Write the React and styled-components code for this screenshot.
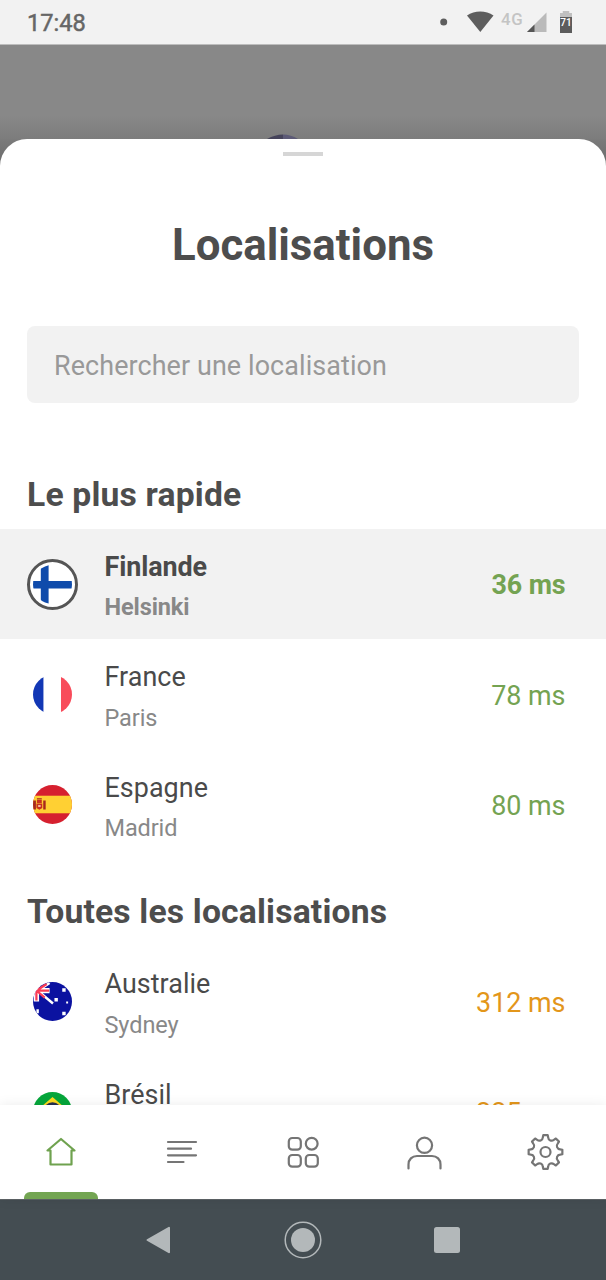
import React from "react";
import styled, { createGlobalStyle } from "styled-components";

const GlobalStyle = createGlobalStyle`
  body {
    margin: 0;
    font-family: Roboto, "Liberation Sans", sans-serif;
    background: #fff;
  }

  * {
    box-sizing: border-box;
  }
`;

const Screen = styled.div`
  display: flex;
  flex-direction: column;
  width: 606px;
  height: 1280px;
  overflow: hidden;
  background: #888;
`;

const StatusBar = styled.header`
  display: flex;
  justify-content: space-between;
  flex: none;
  height: 45px;
  padding-left: 27px;
  background: #f2f2f2;
  border-bottom: 1px solid #bdbdbd;
`;

const Clock = styled.span`
  font-size: 23.6px;
  font-weight: 400;
  line-height: 46px;
  color: #666;
  -webkit-text-stroke: 0.5px #666;
`;

const StatusIcons = styled.div`
  display: flex;
  align-items: flex-start;
  padding-right: 34px;

  svg {
    display: block;
  }
`;

const Network = styled.span`
  width: 26px;
  margin-left: 7px;
  font-size: 16.8px;
  font-weight: 500;
  line-height: 38px;
  color: #c4c4c4;
  letter-spacing: 0.6px;
`;

const Battery = styled.div`
  display: flex;
  justify-content: center;
  width: 12px;
  height: 22px;
  margin: 11px 0 0 13px;
  padding-top: 4px;
  background: linear-gradient(#c0c0c0 6px, #5c5c5c 6px);
  clip-path: polygon(23% 0, 77% 0, 77% 2px, 100% 2px, 100% 100%, 0 100%, 0 2px, 23% 2px);
  font-size: 10px;
  font-weight: 500;
  line-height: 15px;
  color: #fff;
`;

const Backdrop = styled.div`
  display: flex;
  flex: none;
  align-items: flex-end;
  height: 94px;
  padding-left: 263px;
  background: linear-gradient(#888 0, #888 70px, #7c7c7c 94px);

  svg {
    display: block;
  }
`;

const SheetArea = styled.main`
  flex: none;
  height: 966px;
  overflow: hidden;
  background: linear-gradient(#7b7b7b, #686868 30px);
`;

const Sheet = styled.section`
  display: flex;
  flex-direction: column;
  height: 1040px;
  padding-top: 13px;
  background: #fff;
  border-radius: 27px 27px 0 0;
`;

const Handle = styled.div`
  flex: none;
  align-self: center;
  width: 40px;
  height: 4px;
  background: #d6d6d6;
`;

const Title = styled.h1`
  margin: 59px 0 0;
  font-size: 43.8px;
  font-weight: 700;
  line-height: 60px;
  text-align: center;
  color: #4d4d4d;
`;

const Search = styled.input`
  flex: none;
  height: 77px;
  margin: 51px 27px 72px;
  padding: 2px 27px 0;
  border: 0;
  border-radius: 8px;
  background: #f2f2f2;
  font-family: inherit;
  font-size: 26.9px;
  letter-spacing: 0.11px;
  color: #4d4d4d;

  &::placeholder {
    color: #999;
    opacity: 1;
  }
`;

const SectionTitle = styled.h2`
  flex: none;
  margin: 0;
  padding: ${props => (props.$first ? 0 : 32)}px 27px 14px;
  font-size: 33.7px;
  font-weight: 700;
  line-height: 40px;
  letter-spacing: 0.17px;
  color: #4d4d4d;
`;

const Row = styled.div`
  display: flex;
  flex: none;
  align-items: center;
  height: 110.4px;
  padding: 0 40.5px 0 27px;
  background: ${props => (props.$active ? "#f2f2f2" : "transparent")};
  font-weight: ${props => (props.$active ? 700 : 400)};
`;

const FlagRing = styled.div`
  display: flex;
  align-items: center;
  justify-content: center;
  width: 51px;
  height: 51px;
  border: 3.5px solid ${props => (props.$active ? "#555" : "transparent")};
  border-radius: 50%;
  background: ${props => (props.$active ? "#fff" : "transparent")};

  svg {
    flex: none;
  }
`;

const Place = styled.div`
  flex: 1;
  padding: 6.6px 0 0 26.5px;
  line-height: 40.4px;
`;

const Country = styled.div`
  font-size: 26.9px;
  letter-spacing: ${props => (props.$active ? -0.1 : 0.05)}px;
  color: #4a4a4a;
`;

const City = styled.div`
  min-height: 40.4px;
  font-size: 23.5px;
  letter-spacing: -0.1px;
  color: #888;
`;

const Ping = styled.div`
  padding-top: 2.5px;
  font-size: 26.9px;
  letter-spacing: ${props => (props.$active ? -0.15 : 0)}px;
  color: ${props => (props.$slow ? "#e3961a" : "#74a352")};
`;

const TabBar = styled.nav`
  position: relative;
  display: flex;
  flex: none;
  height: 94px;
  background: #fff;
  box-shadow: 0 0 12px rgba(0, 0, 0, 0.08);
`;

const Tab = styled.button`
  display: flex;
  flex: 1;
  flex-direction: column;
  align-items: center;
  justify-content: space-between;
  padding: 28px 0 0;
  border: 0;
  background: none;
  color: ${props => (props.$active ? "#6fa24f" : "#757575")};

  &::after {
    content: "";
    width: 74px;
    height: 7px;
    border-radius: 6px 6px 0 0;
    background: ${props => (props.$active ? "#73a552" : "transparent")};
  }
`;

const SystemBar = styled.footer`
  display: flex;
  flex: none;
  align-items: center;
  justify-content: space-between;
  height: 81px;
  padding: 0 146px;
  background: #444d52;
  border-top: 1px solid #5d6366;
  color: #b3b8ba;
`;

const flags = {
  fi: (
    <>
      <rect width="40" height="40" fill="#fff" />
      <path d="M8 0h8v40H8zM0 16.500h40v7.500H0z" fill="#0f4bab" />
    </>
  ),
  fr: (
    <>
      <rect width="40" height="40" fill="#fff" />
      <path d="M0 0h10.700v40H0z" fill="#1237b5" />
      <path d="M28.700 0H40v40H28.700z" fill="#f84b5a" />
    </>
  ),
  es: (
    <>
      <rect width="40" height="40" fill="#d6202f" />
      <rect y="11" width="40" height="18" fill="#ffd033" />
      <path d="M0 16h3v9H0zM10.500 16h2.500v9h-2.500z" fill="#a8281e" />
      <path d="M4 15.500h5v3H4zM3.500 19h6v4.500l-3 2-3-2z" fill="#c8301f" />
      <path d="M4 13.500h5v1.300H4z" fill="#a8281e" />
      <path d="M5.300 20.500h2.500v2H5.300z" fill="#f5b8a0" />
    </>
  ),
  au: (
    <>
      <rect width="40" height="40" fill="#0b12a0" />
      <path d="M5 9 17 1M5 9l15.500 13" stroke="#fff" strokeWidth="2.500" />
      <path d="M0 8.800h17M3.500 8.800V20" stroke="#fff" strokeWidth="5.500" />
      <path d="M0 8.800h16.500M3.500 8.800V19M5 8 14 2M5 10l7 6" stroke="#fa3b55" strokeWidth="2.300" />
      <path d="M22 16.500h3.500V20H22zM30 6.500h3.500V10H30zM30 30.500h3.500V34H30zM34 20h2v2h-2zM3.500 28H6v4H3.500z" fill="#fff" />
    </>
  ),
  br: (
    <>
      <rect width="40" height="40" fill="#05a63b" />
      <path d="M20 5 37 20 20 35 3 20z" fill="#fddb1f" />
      <circle cx="20" cy="20" r="9.500" fill="#26304f" />
    </>
  ),
};

const Flag = ({ code }) => (
  <svg width="39" height="39" viewBox="0 0 40 40">
    <clipPath id={`flag-${code}`}>
      <circle cx="20" cy="20" r="20" />
    </clipPath>
    <g clipPath={`url(#flag-${code})`} fill="none">
      {flags[code]}
    </g>
  </svg>
);

// eight narrow teeth, each joined to the next one by a concave arc
const gearPath = () => {
  const point = (deg, r) => {
    const rad = (deg * Math.PI) / 180;
    return `${(19.5 + r * Math.cos(rad)).toFixed(2)} ${(19 + r * Math.sin(rad)).toFixed(2)}`;
  };
  let d = "";
  for (let i = 0; i < 8; i++) {
    const a = i * 45;
    d += `${i ? "L" : "M"}${point(a - 7.5, 17)}L${point(a + 7.5, 17)}`;
    d += `L${point(a + 10.5, 14.8)}A3.400 3.400 0 0 0 ${point(a + 34.5, 14.8)}`;
  }
  return `${d}Z`;
};

const icons = {
  home: <path d="M5.500 17.500 19 6l13.500 11.500H29.500V31.500h-21V17.500z" />,
  list: <path d="M5 9h28M5 15.700h23M5 22.300h28M5 29h15.500" />,
  apps: (
    <>
      <rect x="4.800" y="5" width="12" height="11.700" rx="3.500" />
      <circle cx="27.700" cy="10.700" r="5.900" />
      <rect x="4.800" y="22" width="12" height="11.700" rx="3.500" />
      <rect x="21.800" y="22" width="12" height="11.700" rx="3.500" />
    </>
  ),
  user: (
    <>
      <circle cx="19.500" cy="12.300" r="7.600" />
      <path d="M3.500 35.500v-4c0-5 3.500-8.500 8.500-8.500h15c5 0 8.500 3.500 8.500 8.500v4" />
    </>
  ),
  settings: (
    <>
      <path d={gearPath()} />
      <circle cx="19.500" cy="19" r="5" />
    </>
  ),
};

const Icon = ({ name }) => (
  <svg
    width="38"
    height="38"
    viewBox="0 0 38 38"
    fill="none"
    stroke="currentColor"
    strokeWidth="2.2"
    strokeLinecap="round"
    strokeLinejoin="round"
  >
    {icons[name]}
  </svg>
);

const fastest = [
  { code: "fi", country: "Finlande", city: "Helsinki", ping: 36, active: true },
  { code: "fr", country: "France", city: "Paris", ping: 78 },
  { code: "es", country: "Espagne", city: "Madrid", ping: 80 },
];

const all = [
  { code: "au", country: "Australie", city: "Sydney", ping: 312 },
  { code: "br", country: "Brésil", ping: 225 },
];

const Location = ({ code, country, city, ping, active }) => (
  <Row $active={active}>
    <FlagRing $active={active}>
      <Flag code={code} />
    </FlagRing>
    <Place>
      <Country $active={active}>{country}</Country>
      <City>{city}</City>
    </Place>
    <Ping $active={active} $slow={ping > 200}>
      {ping} ms
    </Ping>
  </Row>
);

const App = () => (
  <Screen>
    <GlobalStyle />
    <StatusBar>
      <Clock>17:48</Clock>
      <StatusIcons>
        <svg width="54" height="44" viewBox="0 0 54 44" fill="#5e5e5e">
          <circle cx="3.700" cy="22" r="3.500" />
          <path d="M27 15.500c7.500-5.500 19-5.500 26.500 0L40.300 32z" />
        </svg>
        <Network>4G</Network>
        <svg width="20" height="44" viewBox="0 0 20 44">
          <path d="M0 32 19.500 12.500V32z" fill="#bababa" />
          <path d="M0 32l7.500-7.500V32z" fill="#555" />
        </svg>
        <Battery>71</Battery>
      </StatusIcons>
    </StatusBar>
    <Backdrop>
      <svg width="40" height="5" viewBox="0 0 40 5">
        <path d="M4 5Q12 .5 20 .5V5z" fill="#45435a" />
        <path d="M20 .5q8 0 15 4.500H20z" fill="#5c5a76" />
      </svg>
    </Backdrop>
    <SheetArea>
      <Sheet>
        <Handle />
        <Title>Localisations</Title>
        <Search placeholder="Rechercher une localisation" />
        <SectionTitle $first>Le plus rapide</SectionTitle>
        {fastest.map(item => (
          <Location key={item.code} {...item} />
        ))}
        <SectionTitle>Toutes les localisations</SectionTitle>
        {all.map(item => (
          <Location key={item.code} {...item} />
        ))}
      </Sheet>
    </SheetArea>
    <TabBar>
      {Object.keys(icons).map(name => (
        <Tab key={name} $active={name === "home"}>
          <Icon name={name} />
        </Tab>
      ))}
    </TabBar>
    <SystemBar>
      <svg width="25" height="28" viewBox="0 0 25 28">
        <path d="M1.500 14 23 1.800v24.400z" fill="currentColor" stroke="currentColor" strokeWidth="2" strokeLinejoin="round" />
      </svg>
      <svg width="38" height="38" viewBox="0 0 38 38">
        <circle cx="19" cy="19" r="17.800" fill="none" stroke="currentColor" strokeWidth="1.500" />
        <circle cx="19" cy="19" r="12" fill="currentColor" />
      </svg>
      <svg width="26" height="26" viewBox="0 0 26 26">
        <rect width="26" height="26" rx="2.500" fill="currentColor" />
      </svg>
    </SystemBar>
  </Screen>
);

export default App;
